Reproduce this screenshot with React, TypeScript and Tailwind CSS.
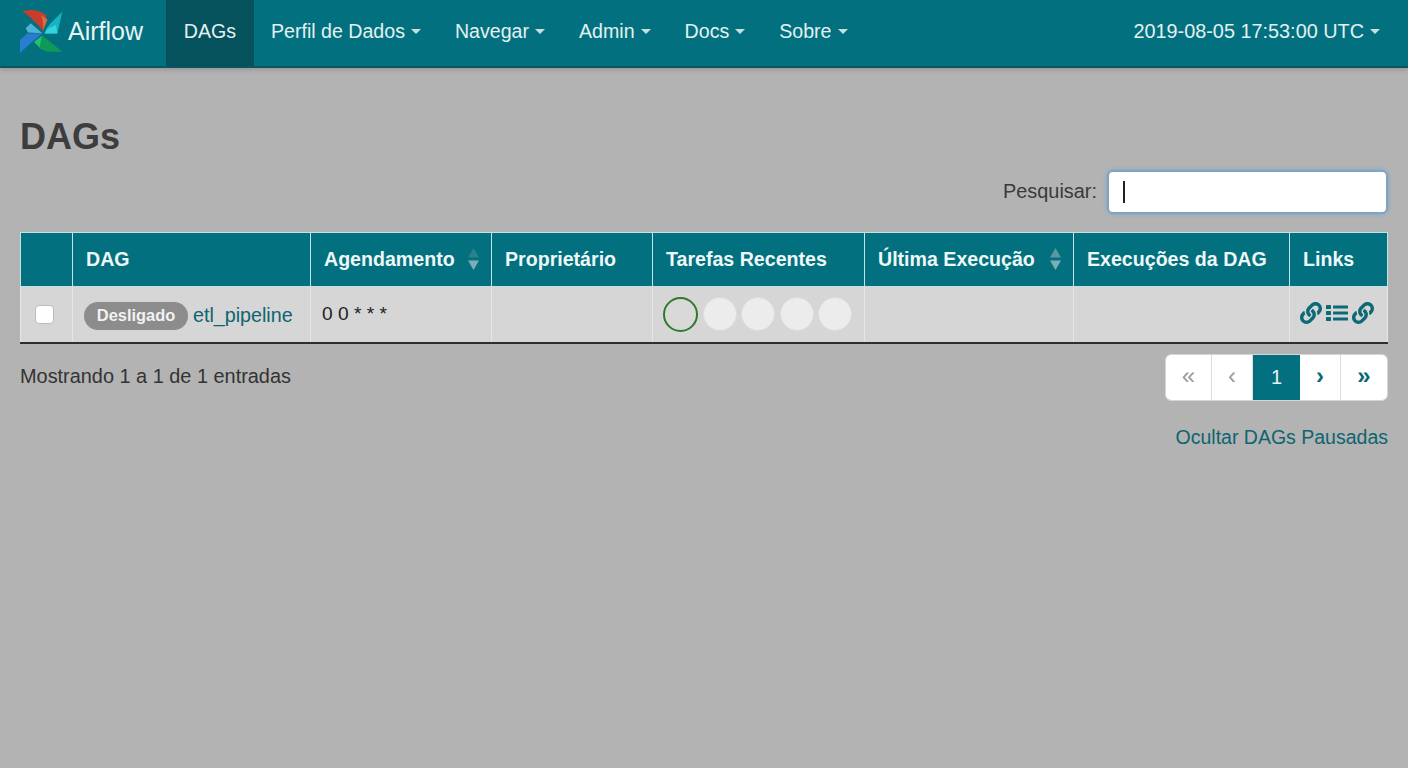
import React from "react";
import { FaLink } from "react-icons/fa";

const font = "[font-family:'Liberation_Sans',Arial,sans-serif]";

function Caret() {
  return <span className="ml-[6px] inline-block h-0 w-0 border-x-[5px] border-t-[5px] border-x-transparent border-t-[#c8dfe2] align-middle" />;
}

function NavItem({ label }: { label: string }) {
  return (
    <div className="flex items-center px-[17px] pb-[3px] text-[19.6px] text-[#e2f1f2]">
      {label}
      <Caret />
    </div>
  );
}

function Logo() {
  return (
    <svg width="44" height="44" viewBox="0 0 44 44" className="shrink-0">
      <path d="M2.3 1 C6 0.2 10 0 14 0 C18 0.5 23 2.5 26.5 5.5 L23.3 21 C17 13 9 6 2.3 1Z" fill="#c63d2c" />
      <path d="M21 5 L27.5 9.5 L23 20.5 C23.5 15 22.8 9.5 21 5Z" fill="#dd6a45" />
      <path d="M42.3 1.7 L37.3 23.5 L24 23.5 C26 19 28 16.5 30.7 13.3Z" fill="#14b4c6" />
      <path d="M27.5 19 L36 15 L37.3 23.5 L25 23.5Z" fill="#35d3de" />
      <path d="M42.3 41.7 L22.3 25.5 L19 38.3 L27.3 41.7Z" fill="#0d9a58" />
      <path d="M22.3 25.5 L19.5 37.5 L14 32Z" fill="#23c070" />
      <path d="M0 43.3 L0 30 L7.3 23.5 L22.3 23.5 C15 29 7 36 0 43.3Z" fill="#2a7cd2" />
      <path d="M5.7 18.3 L10.7 13.3 L22.3 23.3 L8 22.5Z" fill="#4db3da" />
    </svg>
  );
}

function Sort({ active }: { active?: boolean }) {
  return (
    <svg width="13" height="24" viewBox="0 0 13 24" className="mr-[-2px] shrink-0">
      <path d="M6.5 1 L12 10.5 H1Z" fill="#5d97a1" opacity={active ? 1 : 0.45} />
      <path d="M6.5 23 L12 13.5 H1Z" fill="#7eadb5" />
    </svg>
  );
}

function TaskList() {
  return (
    <svg width="22" height="18" viewBox="0 0 22 18" className="shrink-0">
      <g fill="#0b6a76">
        <rect x="0" y="1" width="5" height="4" rx="0.6" />
        <rect x="0" y="7" width="5" height="4" rx="0.6" />
        <rect x="0" y="13" width="5" height="4" rx="0.6" />
        <rect x="7" y="1.5" width="15" height="3" rx="0.6" />
        <rect x="7" y="7.5" width="15" height="3" rx="0.6" />
        <rect x="7" y="13.5" width="15" height="3" rx="0.6" />
      </g>
    </svg>
  );
}

const th = "border border-[#bfe3e6] px-[13px] text-left align-middle text-[19.6px] font-bold text-[#eef8f8]";
const td = "border border-[#e6e6e6] align-middle";
const pageBtn = "flex items-center justify-center bg-white border-r border-[#dddddd] pb-[3px] text-[24px]";

export default function App() {
  return (
    <div className={`${font} min-h-[768px] bg-[#b3b3b3] text-[#333333]`}>
      <nav className="flex h-[68px] border-b-2 border-[#0c5560] bg-[#03707f] shadow-[0_2px_4px_rgba(0,0,0,0.15)]">
        <div className="flex w-[166px] items-center gap-[4px] pb-[3px] pl-[20px] text-[25px] text-[#e6f4f4]">
          <Logo />
          <span>Airflow</span>
        </div>
        <div className="flex w-[88px] items-center justify-center bg-[#05525d] pb-[3px] text-[19.6px] text-[#e2f1f2]">DAGs</div>
        <NavItem label="Perfil de Dados" />
        <NavItem label="Navegar" />
        <NavItem label="Admin" />
        <NavItem label="Docs" />
        <NavItem label="Sobre" />
        <div className="ml-auto flex items-center pb-[3px] pr-[28px] text-[19.85px] text-[#e2f1f2]">
          2019-08-05 17:53:00 UTC
          <Caret />
        </div>
      </nav>

      <main className="px-[20px]">
        <h1 className="pt-[45px] text-[36px] font-bold leading-[48px] text-[#3d3d3d]">DAGs</h1>
        <div className="mt-[9px] flex items-center justify-end gap-[10px] text-[19.9px] text-[#3a3a3a]">
          <span>Pesquisar:</span>
          <div className="flex h-[44px] w-[281px] items-center rounded-[6px] border-2 border-[#7ea4c2] bg-white pl-[14px] shadow-[0_0_4px_#7ea4c2]">
            <div className="h-[22px] w-[1.5px] bg-[#222222]" />
          </div>
        </div>

        <table className="mt-[18px] w-[1367px] table-fixed border-collapse">
          <colgroup>
            <col className="w-[52px]" />
            <col className="w-[238px]" />
            <col className="w-[181px]" />
            <col className="w-[161px]" />
            <col className="w-[212px]" />
            <col className="w-[209px]" />
            <col className="w-[216px]" />
            <col className="w-[98px]" />
          </colgroup>
          <thead>
            <tr className="h-[54px] bg-[#03707f]">
              <th className={th} />
              <th className={th}>DAG</th>
              <th className={th}>
                <div className="flex items-center justify-between">
                  <span>Agendamento</span>
                  <Sort />
                </div>
              </th>
              <th className={th}>Proprietário</th>
              <th className={th}>Tarefas Recentes</th>
              <th className={th}>
                <div className="flex items-center justify-between">
                  <span>Última Execução</span>
                  <Sort active />
                </div>
              </th>
              <th className={th}>Execuções da DAG</th>
              <th className={th}>Links</th>
            </tr>
          </thead>
          <tbody>
            <tr className="h-[56px] border-b-2 border-b-[#2e2e2e] bg-[#d6d6d6]">
              <td className={td}>
                <div className="flex pl-[14px]">
                  <div className="h-[19px] w-[19px] rounded-[4px] border border-[#bbbbbb] bg-white" />
                </div>
              </td>
              <td className={td}>
                <div className="flex items-center gap-[5px] pl-[11px] pt-[3px]">
                  <span className="flex h-[28px] w-[104px] items-center justify-center rounded-[14px] bg-[#8c8c8c] text-[16.4px] font-bold text-[#f2f2f2]">
                    Desligado
                  </span>
                  <span className="text-[19.7px] text-[#0e6470]">etl_pipeline</span>
                </div>
              </td>
              <td className={`${td} pl-[11px] text-[19.2px] text-[#222222]`}>0 0 * * *</td>
              <td className={td} />
              <td className={td}>
                <div className="flex items-center gap-[4.5px] pl-[10px]">
                  <div className="h-[35px] w-[35px] rounded-full border-2 border-[#2f7a2a] bg-[#d9d9d9]" />
                  <div className="h-[34px] w-[34px] rounded-full border border-[#dcdcdc] bg-[#ececec]" />
                  <div className="h-[34px] w-[34px] rounded-full border border-[#dcdcdc] bg-[#ececec]" />
                  <div className="h-[34px] w-[34px] rounded-full border border-[#dcdcdc] bg-[#ececec]" />
                  <div className="h-[34px] w-[34px] rounded-full border border-[#dcdcdc] bg-[#ececec]" />
                </div>
              </td>
              <td className={td} />
              <td className={td} />
              <td className={td}>
                <div className="flex items-center gap-[4px] pb-[3px] pl-[10px]">
                  <FaLink className="h-[22px] w-[22px] text-[#0b6a76]" />
                  <TaskList />
                  <FaLink className="h-[22px] w-[22px] text-[#0b6a76]" />
                </div>
              </td>
            </tr>
          </tbody>
        </table>

        <div className="mt-[10px] flex items-start justify-between">
          <div className="pt-[8px] text-[19.9px] text-[#333333]">Mostrando 1 a 1 de 1 entradas</div>
          <div className="flex h-[47px] w-[223px] overflow-hidden rounded-[6px] border border-[#d5d5d5] text-[20px]">
            <div className={`${pageBtn} w-[46px] text-[#9a9a9a]`}>«</div>
            <div className={`${pageBtn} w-[41px] text-[#9a9a9a]`}>‹</div>
            <div className="flex w-[47px] items-center justify-center bg-[#03707f] text-[#e6f4f4]">1</div>
            <div className={`${pageBtn} w-[41px] font-bold text-[#0b6a76]`}>›</div>
            <div className="flex flex-1 items-center justify-center bg-white pb-[3px] text-[24px] font-bold text-[#0b6a76]">»</div>
          </div>
        </div>
        <div className="mt-[22px] text-right text-[19.5px] text-[#0e6470]">Ocultar DAGs Pausadas</div>
      </main>
    </div>
  );
}
